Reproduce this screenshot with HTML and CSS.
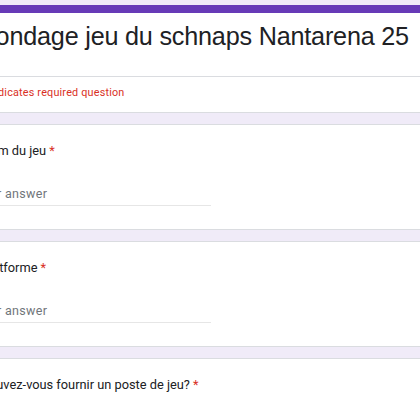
FILE: index.html
```html
<!DOCTYPE html>
<html lang="fr">
<head>
<meta charset="utf-8">
<title>Sondage jeu du schnaps Nantarena 25</title>
<link rel="stylesheet" href="styles.css">
</head>
<body>
<main class="form">
  <section class="card header-card">
    <h1 class="title">Sondage jeu du schnaps Nantarena 25</h1>
    <div class="divider"></div>
    <p class="required-note">* Indicates required question</p>
  </section>

  <section class="card question-card">
    <div class="question">Nom du jeu <span class="star">*</span></div>
    <div class="answer">Your answer</div>
  </section>

  <section class="card question-card">
    <div class="question">Platforme <span class="star">*</span></div>
    <div class="answer">Your answer</div>
  </section>

  <section class="card question-card">
    <div class="question">Pouvez-vous fournir un poste de jeu? <span class="star">*</span></div>
    <div class="options">
      <div class="option"><span class="radio"></span><span>Oui</span></div>
      <div class="option"><span class="radio"></span><span>Non</span></div>
    </div>
  </section>
</main>
</body>
</html>
```

FILE: styles.css
```css
html, body {
  margin: 0;
  padding: 0;
}

body {
  background: #f0ebf8;
  overflow: hidden;
  font-family: Roboto, "Liberation Sans", Arial, sans-serif;
  color: #202124;
}

.form {
  margin-left: -44px;
  width: 540px;
  padding-top: 5px;
  display: flex;
  flex-direction: column;
  gap: 11px;
}

.card {
  background: #ffffff;
  border: 1px solid #dadce0;
  border-radius: 8px;
  box-sizing: border-box;
}

.header-card {
  border-top: 8px solid #673ab7;
}

.title {
  margin: 0;
  padding: 5px 24px 22px 22px;
  font-family: "Liberation Sans", Arial, sans-serif;
  font-weight: 400;
  font-size: 25.2px;
  letter-spacing: -0.2px;
  line-height: 36px;
  color: #202124;
  white-space: nowrap;
}

.divider {
  height: 1px;
  background: #dadce0;
}

.required-note {
  margin: 0;
  padding: 8px 24px 11px 24px;
  font-family: Roboto, "Noto Sans", sans-serif;
  font-size: 10.8px;
  line-height: 16px;
  letter-spacing: 0.2px;
  color: #d93025;
}

.question-card {
  height: 106px;
  padding: 16px 24px 0;
}

.question {
  font-family: Roboto, "Liberation Sans", Arial, sans-serif;
  font-size: 12.8px;
  line-height: 20px;
  color: #202124;
}

.star {
  color: #d93025;
}

.answer {
  margin-top: 25px;
  margin-left: -6px;
  width: 236px;
  padding-bottom: 3px;
  border-bottom: 1px solid #e6e6e6;
  font-family: Roboto, "Noto Sans", sans-serif;
  font-size: 12.5px;
  line-height: 16px;
  letter-spacing: 0.3px;
  color: #70757a;
}

.options {
  margin-top: 20px;
  display: flex;
  flex-direction: column;
  gap: 12px;
}

.option {
  display: flex;
  align-items: center;
  gap: 18px;
  height: 20px;
  font-family: Roboto, "Noto Sans", sans-serif;
  font-size: 13px;
  color: #202124;
}

.radio {
  width: 20px;
  height: 20px;
  border: 2px solid #5f6368;
  border-radius: 50%;
  box-sizing: border-box;
}
```
